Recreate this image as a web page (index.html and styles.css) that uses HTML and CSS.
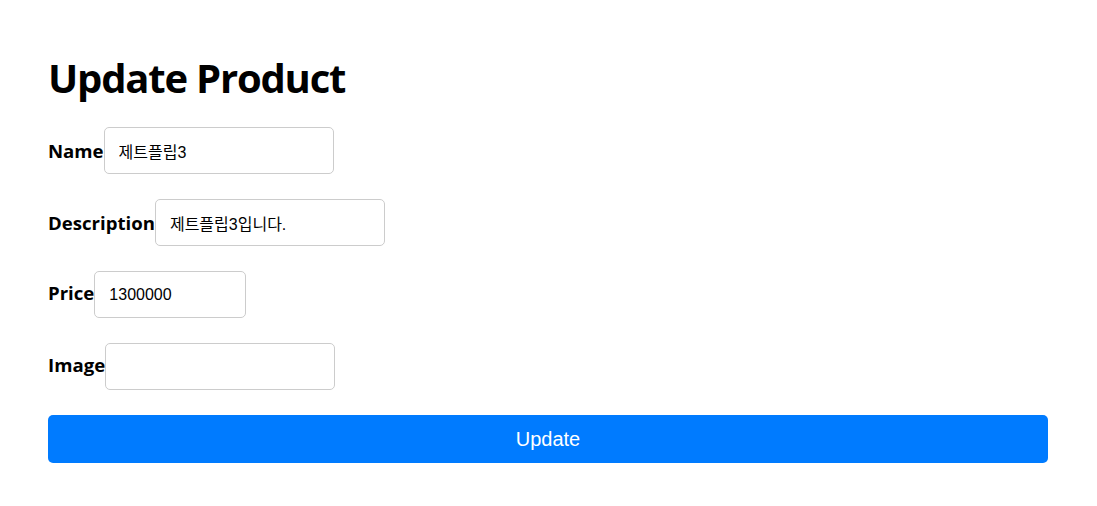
FILE: index.html
```html
<!DOCTYPE html>
<html lang="ko">
<head>
<meta charset="utf-8">
<title>Update Product</title>
<link rel="stylesheet" href="styles.css">
</head>
<body>
<div class="container">
  <h1 class="title">Update Product</h1>
  <form class="form">
    <div class="row">
      <label class="label" for="name">Name</label>
      <input class="input" id="name" type="text" value="제트플립3">
    </div>
    <div class="row">
      <label class="label" for="desc">Description</label>
      <input class="input" id="desc" type="text" value="제트플립3입니다.">
    </div>
    <div class="row">
      <label class="label" for="price">Price</label>
      <input class="input input-price" id="price" type="text" value="1300000">
    </div>
    <div class="row">
      <label class="label" for="image">Image</label>
      <input class="input" id="image" type="text" value="">
    </div>
    <button class="button" type="button">Update</button>
  </form>
</div>
</body>
</html>
```
FILE: styles.css
```css
html, body {
  margin: 0;
  padding: 0;
  background: #ffffff;
}
body {
  font-family: "Open Sans", "Noto Sans", "Noto Sans CJK KR", sans-serif;
  color: #000;
}
.container {
  width: 1000px;
  padding: 40px 48px;
}
.title {
  font-size: 40px;
  font-weight: 700;
  margin: 12px 0 23px;
  line-height: 1.3;
  letter-spacing: -1.2px;
}
.form {
  display: flex;
  flex-direction: column;
  gap: 25px;
}
.row {
  display: flex;
  align-items: baseline;
}
.label {
  font-size: 18.6px;
  font-weight: 700;
}
.input {
  box-sizing: border-box;
  width: 230px;
  height: 47px;
  padding: 0 14px;
  border: 1px solid #cccccc;
  border-radius: 5px;
  font-family: "Liberation Sans", Arial, "Noto Sans CJK KR", sans-serif;
  font-size: 16px;
  color: #000;
  outline: none;
}
.input-price {
  width: 152px;
}
.button {
  height: 48px;
  width: 100%;
  border: none;
  border-radius: 5px;
  background: #007bff;
  color: #fff;
  font-family: "Liberation Sans", Arial, sans-serif;
  font-size: 20px;
}
```
